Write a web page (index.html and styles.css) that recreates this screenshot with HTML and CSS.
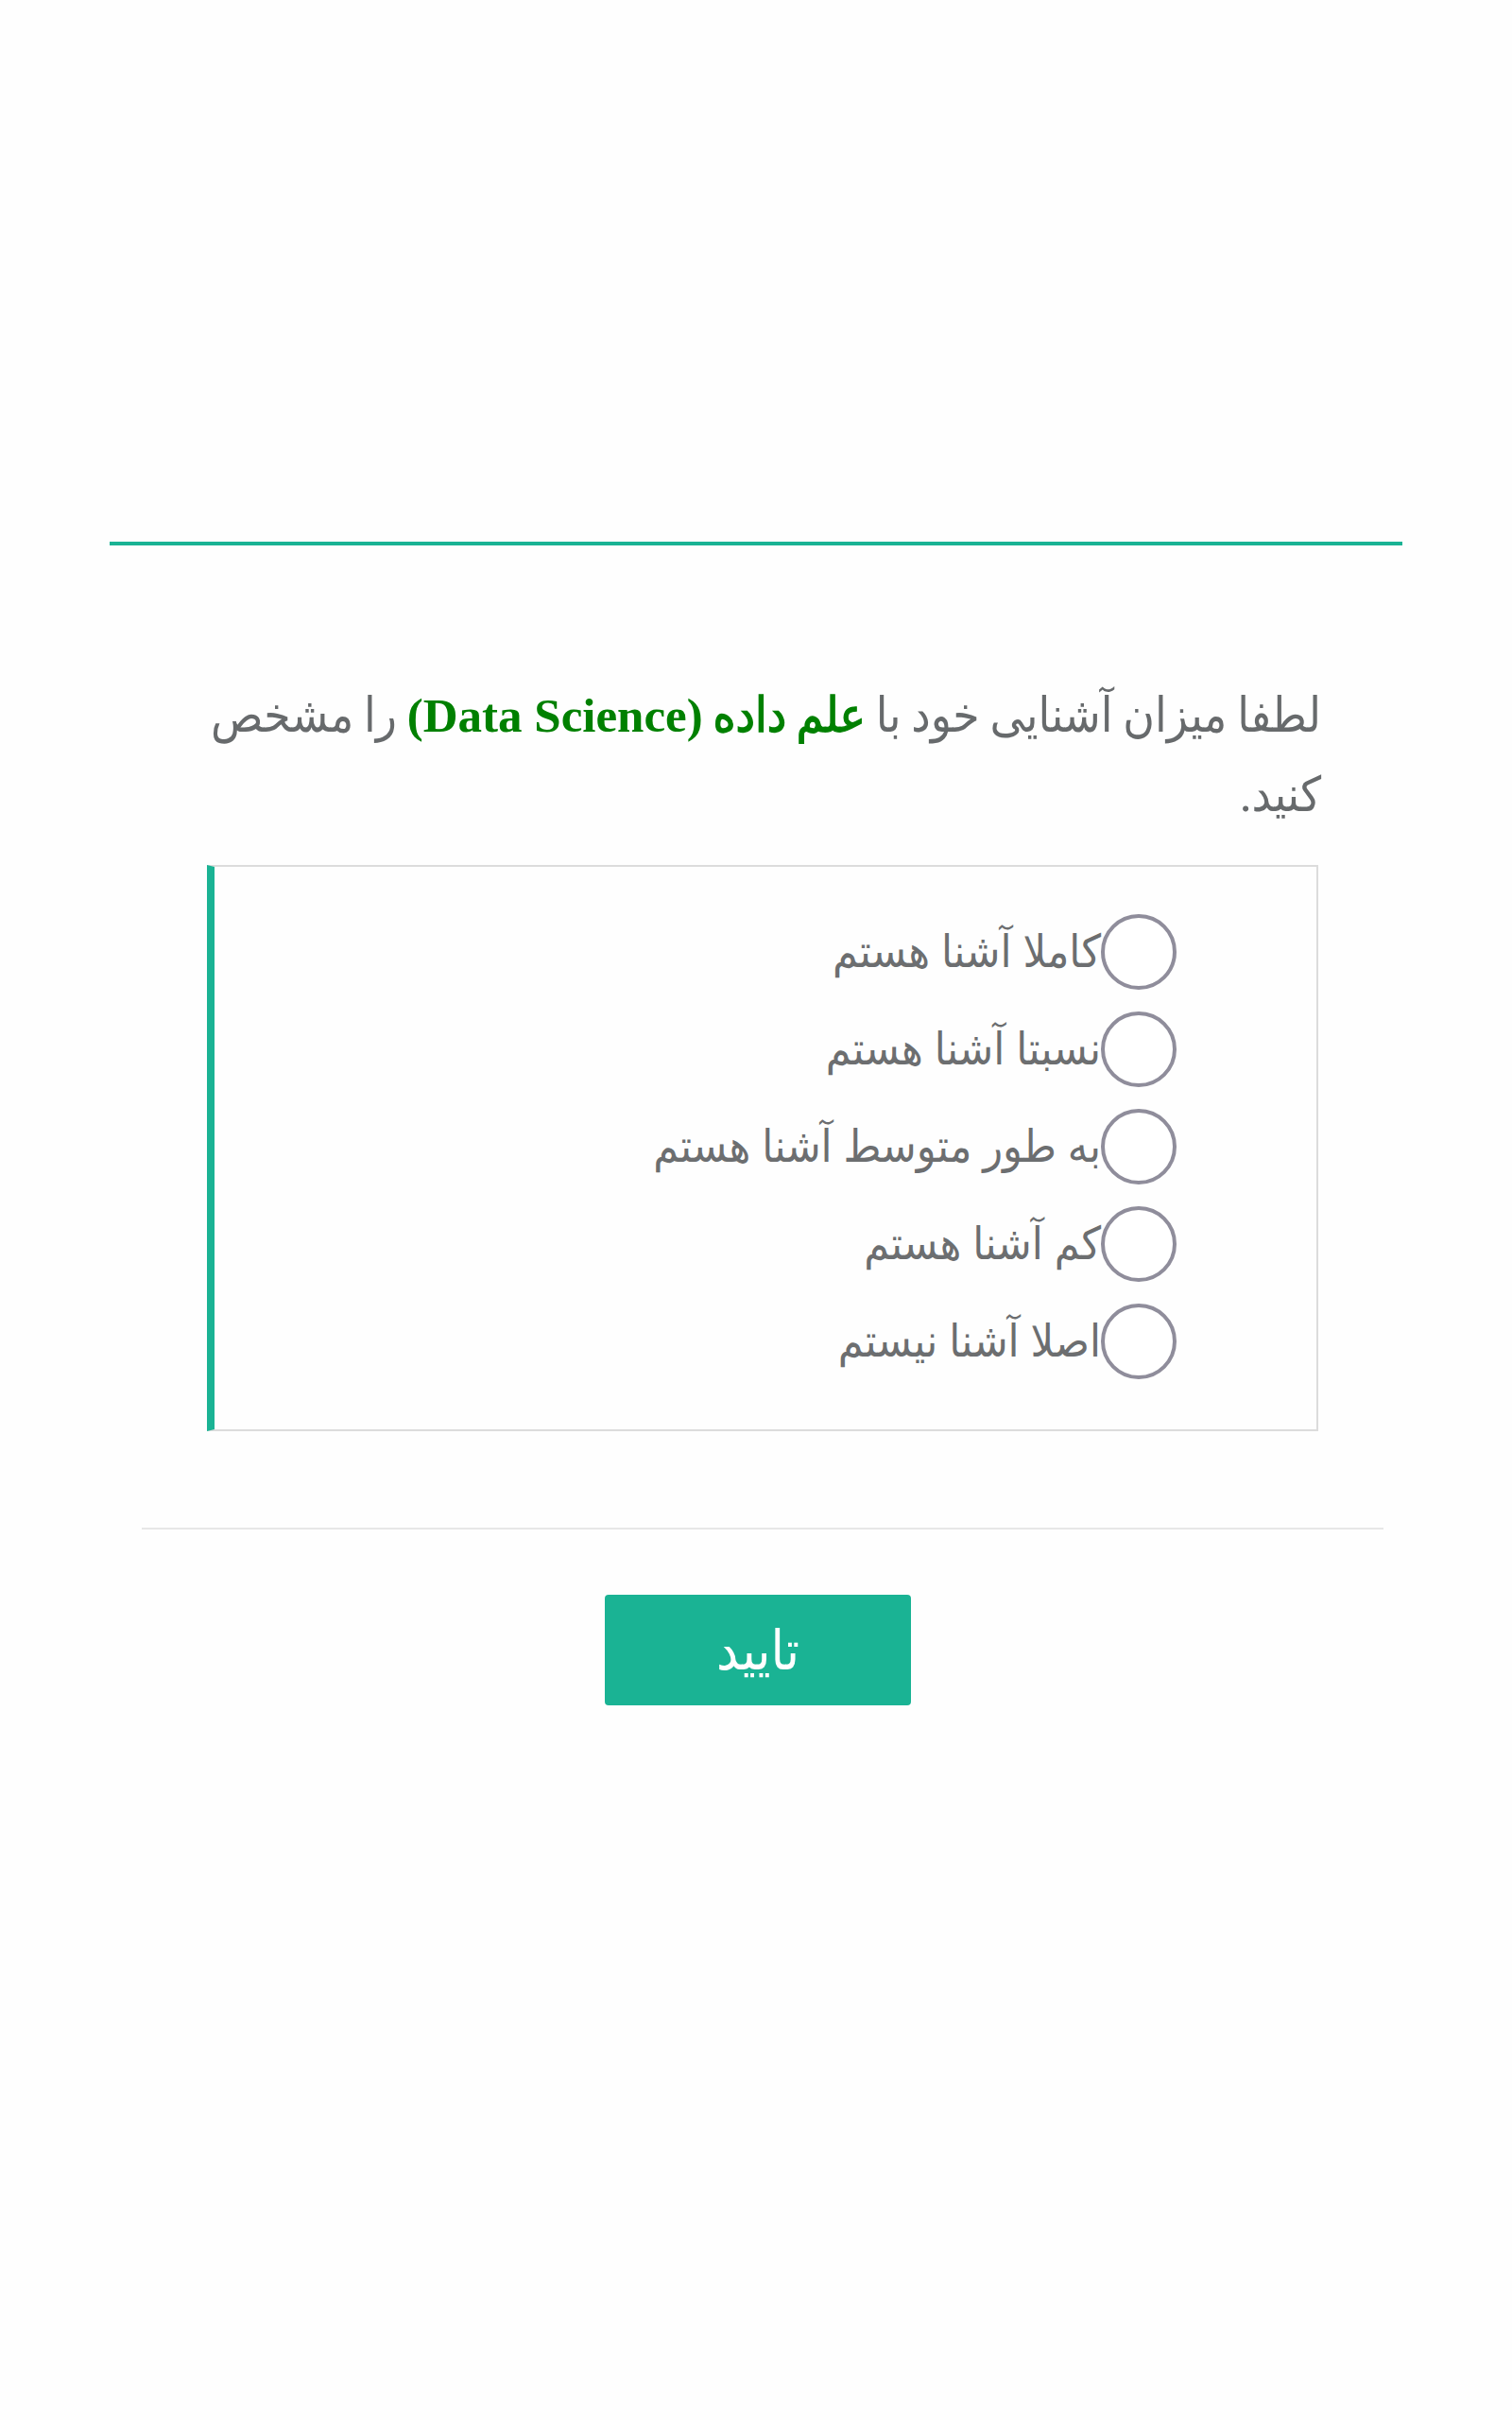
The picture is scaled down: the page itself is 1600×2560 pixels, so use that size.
FILE: index.html
```html
<!DOCTYPE html>
<html lang="fa" dir="rtl">
<head>
<meta charset="utf-8">
<title>Survey</title>
<link rel="stylesheet" href="styles.css">
</head>
<body>
<div class="page">
  <div class="top-space"></div>
  <div class="rule"></div>
  <div class="question-wrap">
    <h3 class="question">لطفا میزان آشنایی خود با <span class="hl"><span class="hl-ar">علم داده</span> <bdi class="latin" dir="ltr">(Data Science)</bdi></span> را مشخص کنید.</h3>
    <div class="options">
      <label class="option"><span class="radio"></span><span class="label">کاملا آشنا هستم</span></label>
      <label class="option"><span class="radio"></span><span class="label">نسبتا آشنا هستم</span></label>
      <label class="option"><span class="radio"></span><span class="label">به طور متوسط آشنا هستم</span></label>
      <label class="option"><span class="radio"></span><span class="label">کم آشنا هستم</span></label>
      <label class="option"><span class="radio"></span><span class="label">اصلا آشنا نیستم</span></label>
    </div>
  </div>
  <div class="divider"></div>
  <div class="actions">
    <button class="submit" type="button">تایید</button>
  </div>
</div>
</body>
</html>
```

FILE: styles.css
```css
html, body {
  margin: 0;
  padding: 0;
  background: #fefefe;
}
body {
  font-family: "Liberation Serif", "DejaVu Sans", serif;
  color: #676a6c;
}
.page {
  width: 1600px;
  display: flex;
  flex-direction: column;
  align-items: center;
}
.top-space {
  height: 573px;
}
.rule {
  width: 1368px;
  height: 4px;
  background: #1ab394;
}
.question-wrap {
  align-self: flex-start;
  width: 1176px;
  margin-top: 138px;
  margin-right: 205px;
}
.question {
  margin: 0 -3px 0 0;
  padding: 0;
  font-size: 51px;
  line-height: 84px;
  font-weight: normal;
  font-stretch: condensed;
  word-spacing: -2px;
  color: #676a6c;
  text-align: right;
}
.hl {
  color: #008000;
}
.hl-ar {
  -webkit-text-stroke: 1.3px #008000;
}
.latin {
  white-space: nowrap;
  font-size: 51px;
  font-weight: bold;
  word-spacing: 0;
}
.options {
  margin-top: 32px;
  border: 2px solid #dcdcdc;
  border-left: 8px solid #1ab394;
  padding: 50px 148px 57px 0;
  height: 488px;
  display: flex;
  flex-direction: column;
  gap: 23px;
}
.option {
  display: flex;
  align-items: center;
  height: 80px;
  font-size: 48px;
  font-stretch: condensed;
  color: #6c6e70;
}
.radio {
  width: 72px;
  height: 72px;
  border: 4px solid #8f8d9b;
  border-radius: 50%;
  flex: 0 0 auto;
  background: #fff;
}
.label {
  line-height: 80px;
}
.divider {
  width: 1314px;
  height: 2px;
  background: #e7e7e7;
  margin-top: 102px;
  margin-left: 14px;
}
.actions {
  margin-top: 69px;
  display: flex;
  justify-content: center;
  width: 100%;
}
.submit {
  width: 324px;
  height: 117px;
  border: none;
  border-radius: 4px;
  background: #1ab394;
  color: #fff;
  font-family: "Liberation Serif", "DejaVu Sans", serif;
  font-size: 58px;
  font-stretch: condensed;
  padding: 0;
  margin-left: 4px;
}
```
